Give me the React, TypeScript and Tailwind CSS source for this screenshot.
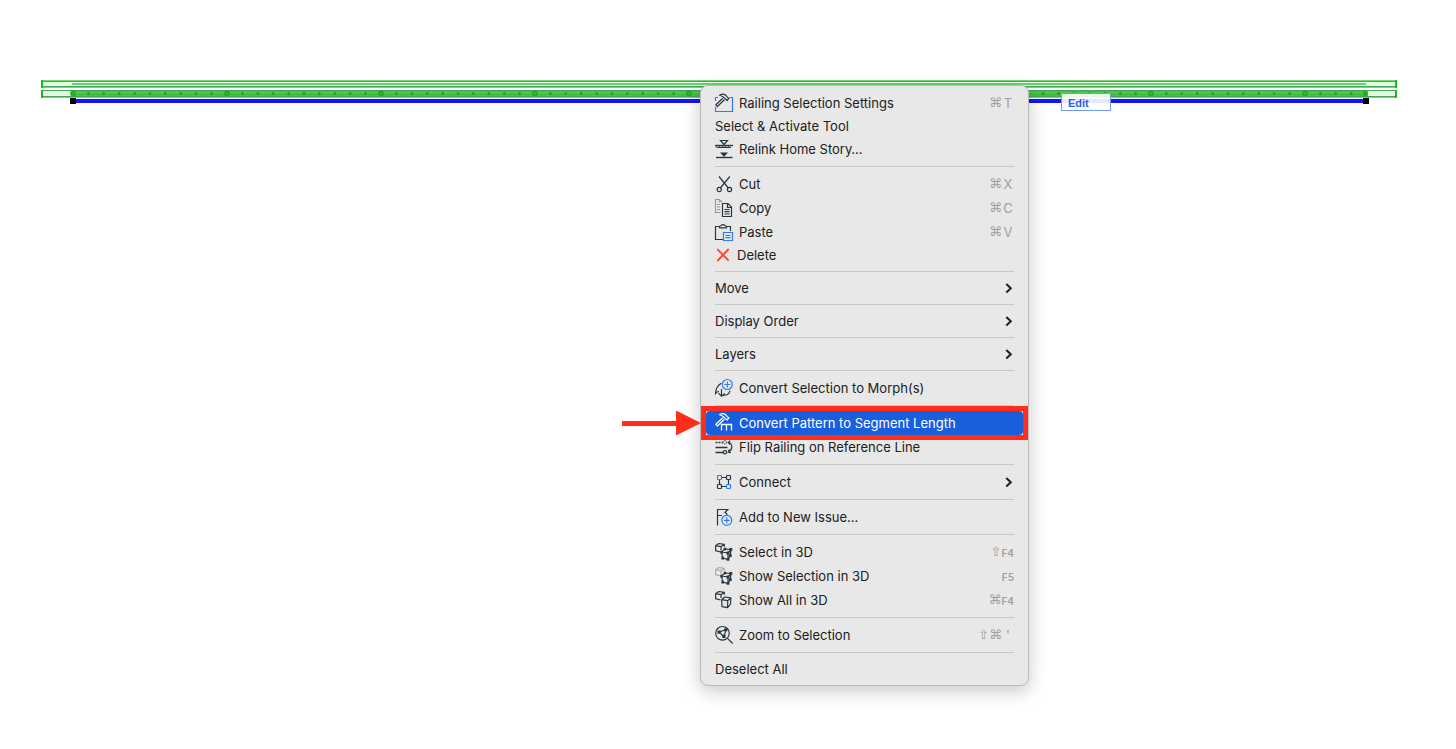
import type { ReactNode } from "react";

const INK = "#29363d";
const BLUE = "#2f7bf6";

function Icon({ children, color = INK }: { children: ReactNode; color?: string }) {
  return (
    <svg
      aria-hidden="true"
      viewBox="0 0 18 20"
      className="h-5 w-[18px] shrink-0 overflow-visible"
      fill="none"
      stroke={color}
      strokeWidth="1.2"
    >
      {children}
    </svg>
  );
}

const hammer = (
  <>
    <path
      d="M4.500 2.300C7 .8 9.800 1 11.300 2.900l1.200 1.600 1.500.7-1.900 2.300-1.300-1-2.600-2.600C7.200 3.200 6 2.800 4.500 2.300Z"
      strokeLinejoin="round"
    />
    <path d="M7.800 5.200.8 11.800l1.600 1.700 7-6.700" strokeLinejoin="round" />
  </>
);

const settingsIcon = (
  <Icon>
    <path d="M3 4.500H.5V8M.5 14v4.500h17v-14h-3" stroke={BLUE} />
    {hammer}
  </Icon>
);

const relinkIcon = (
  <Icon>
    <path d="M5.500 1.500h7L9 5.500Z" />
    <path d="M0 6.500h18" strokeWidth="1.400" />
    <path d="M1 8.500 2.500 6.500M4 8.500l1.500-2M7 8.500l1.500-2M10 8.500l1.500-2M13 8.500l1.500-2M2 8.500h14" strokeWidth="1" />
    <path d="M5 13.500h8L9 18Z" fill={INK} stroke="none" />
    <path d="M1 18.500h16.500" strokeWidth="1.400" />
  </Icon>
);

const cutIcon = (
  <Icon>
    <path d="M4 2.500 13.300 14M14.800 2.500 5.300 14" />
    <circle cx="4.200" cy="15.500" r="2.100" />
    <circle cx="14.500" cy="15.500" r="2.100" />
  </Icon>
);

const copyIcon = (
  <Icon>
    <path d="M5.500 14.500h-5v-13h4l2.500 2.500M4.500 1.500v3M2 6.500h3M2 9h3M2 11.500h3" stroke="#929a9d" />
    <path d="M7.500 5.500h5.500l3.500 3.500v9.500h-9ZM12.500 5.500v4h4M9.500 11.500h5M9.500 13.700h5M9.500 16h5" />
  </Icon>
);

const pasteIcon = (
  <Icon>
    <path d="M8 17.500H.5V4.500H4M12 4.500h3.500V9" />
    <path d="M4.500 5.800V4.200L6 3.700Q8 1.500 10 3.700l1.500.5v1.600Z" strokeLinejoin="round" />
    <path d="M8.500 10.500h9v8h-9ZM10.500 13.500h5M10.500 15.700h5" stroke={BLUE} />
  </Icon>
);

const deleteIcon = (
  <svg aria-hidden="true" viewBox="0 0 16 20" className="h-5 w-4 shrink-0" fill="none" stroke="#fb4a2f" strokeWidth="1.900">
    <path d="M2.300 4.200 13.700 15.700M13.700 4 2.300 16" />
  </svg>
);

const morphIcon = (
  <Icon>
    <path d="M6.300 5.200C3 7 .7 10.500.6 15.500 1.600 14 2.800 13.500 4 13.500M6.500 11v7M3.500 15.200l3 3 3.200-2.700M8.500 17.500c4-.3 6-2 6.500-5" />
    <circle cx="12.300" cy="6.500" r="5" stroke={BLUE} />
    <path d="M12.300 3.500v6M9.300 6.500h6" stroke={BLUE} />
  </Icon>
);

const patternIcon = (
  <Icon color="#ffffff">
    <g transform="translate(0 -.5)">{hammer}</g>
    <path d="M6 11.500h11M6.500 11v6.500M11.500 11v6.500M16.500 11v6.500" strokeWidth="1.300" />
  </Icon>
);

const flipIcon = (
  <Icon>
    <path d="M.5 5.500H8" strokeDasharray="2 1" strokeWidth="1.600" />
    <path d="M.5 10.500h12M.5 15.500h7.500" strokeWidth="1.400" />
    <circle cx="10" cy="5.300" r="1.700" strokeWidth="1" strokeDasharray="1.500 .7" />
    <circle cx="10" cy="15.300" r="1.700" />
    <path d="M13.500 5.500c2.500.5 3.300 2.300 3.300 4.500 0 2.200-1 3.800-3.300 5M15.300 3.700l-2 1.800 1.800 2M14.500 12.300l-1.200 2.700 2.700.7" />
  </Icon>
);

const connectIcon = (
  <Icon>
    <path d="M6.500 5.500h5M4.500 7.500v5M13.500 7.500v5M6.500 14.500h5" />
    <rect x="2.500" y="3.500" width="4" height="4" rx=".8" stroke={BLUE} />
    <rect x="11.500" y="3.500" width="4" height="4" rx=".8" />
    <rect x="2.500" y="12.500" width="4" height="4" rx=".8" />
    <rect x="11.500" y="12.500" width="4" height="4" rx=".8" stroke={BLUE} />
  </Icon>
);

const issueIcon = (
  <Icon>
    <path d="M2.500 18.500v-16h10.300L10 5.500l2.500 2M2.500 8.500H7" />
    <circle cx="11.800" cy="13.300" r="5" stroke={BLUE} />
    <path d="M11.800 10.300v6M8.800 13.300h6" stroke={BLUE} />
  </Icon>
);

const backCube = "M5.500 10 .6 8.700V3.700L3.800 1.500 9.300 2.300V4.800M.6 3.700 6 4.700V8M6 4.700 9.300 2.300";

function MeshIcon({ faded = false }: { faded?: boolean }) {
  return (
    <Icon>
      <path d={backCube} stroke={faded ? "#a9aeb0" : INK} strokeLinejoin="round" />
      <path d="M6.500 10 7.700 16.300l5.300 1V11ZM6.500 10 10 7l6 .5-.7 6L13 17.300M13 11l3-3.500" />
      <path
        d="M5.200 8.700h2.700v2.700H5.200ZM8.700 5.700h2.600v2.600H8.700ZM14.500 6h2.800v2.800h-2.800ZM11.600 9.600h2.800v2.800h-2.800ZM6.400 14.800h2.700v2.700H6.400ZM11.600 15.900h2.800v2.800h-2.800ZM14 12.200h2.700v2.700H14Z"
        fill={INK}
        stroke="none"
      />
    </Icon>
  );
}

const allIcon = (
  <Icon>
    <path d={backCube} strokeLinejoin="round" />
    <path
      d="M6.700 9.700 9.700 7l6.200.8-.4 6.200-2.900 3.700L7 16.700ZM6.700 9.700l6 1 3.200-2.900M12.700 10.700l-.1 7"
      fill="#e8e8e8"
      strokeLinejoin="round"
    />
  </Icon>
);

const zoomIcon = (
  <Icon>
    <circle cx="7.500" cy="8.300" r="6.800" />
    <path d="M12.500 13.300l5.200 5.200M4 7l7-2.300-2 7Z" />
    <path d="M2.500 5.500h3.200v3.200H2.500ZM9.300 3.200h3v3h-3ZM7.300 9.800h3.200V13H7.300Z" fill={INK} stroke="none" />
  </Icon>
);

type Item = {
  label: string;
  icon?: ReactNode;
  mods?: string;
  letter?: string;
  fkey?: string;
  submenu?: boolean;
  active?: boolean;
};

const groups: Item[][] = [
  [
    { label: "Railing Selection Settings", icon: settingsIcon, mods: "⌘", letter: "T" },
    { label: "Select & Activate Tool" },
    { label: "Relink Home Story…", icon: relinkIcon },
  ],
  [
    { label: "Cut", icon: cutIcon, mods: "⌘", letter: "X" },
    { label: "Copy", icon: copyIcon, mods: "⌘", letter: "C" },
    { label: "Paste", icon: pasteIcon, mods: "⌘", letter: "V" },
    { label: "Delete", icon: deleteIcon },
  ],
  [{ label: "Move", submenu: true }],
  [{ label: "Display Order", submenu: true }],
  [{ label: "Layers", submenu: true }],
  [{ label: "Convert Selection to Morph(s)", icon: morphIcon }],
  [
    { label: "Convert Pattern to Segment Length", icon: patternIcon, active: true },
    { label: "Flip Railing on Reference Line", icon: flipIcon },
  ],
  [{ label: "Connect", icon: connectIcon, submenu: true }],
  [{ label: "Add to New Issue…", icon: issueIcon }],
  [
    { label: "Select in 3D", icon: <MeshIcon />, mods: "⇧", fkey: "F4" },
    { label: "Show Selection in 3D", icon: <MeshIcon faded />, fkey: "F5" },
    { label: "Show All in 3D", icon: allIcon, mods: "⌘", fkey: "F4" },
  ],
  [{ label: "Zoom to Selection", icon: zoomIcon, mods: "⇧⌘", letter: "'" }],
  [{ label: "Deselect All" }],
];

function Shortcut({ mods, letter, fkey }: Item) {
  return (
    <kbd className="ml-auto flex items-center font-['Inter',sans-serif] text-[13px] text-[#a0a0a0]">
      {mods && <span className="font-['DejaVu_Sans',sans-serif] text-[13px]">{mods}</span>}
      {letter && <span className="w-3 text-center">{letter}</span>}
      {fkey && <span className="pt-px text-[10px] font-semibold">{fkey}</span>}
    </kbd>
  );
}

function MenuRow({ item }: { item: Item }) {
  const tall = item.icon && item.label !== "Delete";
  return (
    <li role="none" className="relative px-[5px]">
      <button
        type="button"
        role="menuitem"
        aria-haspopup={item.submenu ? "menu" : undefined}
        className={`flex w-full items-center gap-1.5 rounded px-[9px] text-left whitespace-nowrap ${tall ? "h-6" : "h-[22px]"} ${
          item.active ? "bg-[#195fdb] text-white" : "text-[#202020]"
        }`}
      >
        {item.icon}
        <span>{item.label}</span>
        {(item.mods || item.fkey) && <Shortcut {...item} />}
        {item.submenu && (
          <svg aria-hidden="true" viewBox="0 0 10 12" className="ml-auto h-3 w-2.5" fill="none" stroke="#202020" strokeWidth="2">
            <path d="M2.300 2l4.500 4.200-4.500 4.200" />
          </svg>
        )}
      </button>
      {item.active && (
        <>
          <span className="pointer-events-none absolute inset-x-0 -inset-y-[5px] z-10 border-[5px] border-[#ff2d1a]" />
          <svg
            aria-hidden="true"
            viewBox="0 0 79 26"
            className="pointer-events-none absolute top-0 right-full z-10 h-[26px] w-[79px]"
            fill="#ff2d1a"
          >
            <path d="M0 10h54V-.5L79 12 54 24.500V15H0Z" />
          </svg>
        </>
      )}
    </li>
  );
}

function Railing() {
  const posts = Array.from({ length: 84 }, (_, i) => 32 + i * 15.4);
  return (
    <svg role="img" aria-label="Railing plan" viewBox="0 0 1356 26" className="block w-full">
      <rect x="0" y="0" width="1356" height="8" fill="#e1f8e1" />
      <rect x="31" y="1" width="1294" height="6" fill="#f4fff4" />
      <path d="M0 .5h1356M0 7.500h1356" stroke="#73d873" />
      <path d="M0 1.500h1356M0 6.500h1356" stroke="#43a957" />
      <path d="M31 4h1294" stroke="#6dd46b" strokeWidth="2" />
      <rect x="0" y="10" width="1356" height="8" fill="#e1f8e1" />
      <rect x="31" y="11" width="1294" height="6" fill="#3dc23d" />
      <path d="M31 12.500h1294" stroke="#52cd4f" />
      <path d="M0 10.500h1356M0 16.500h1356" stroke="#43a957" />
      <path d="M0 17.500h1356" stroke="#73d873" />
      <path d="M1 0v8M1 10v8M1355 0v8M1355 10v8" stroke="#24b52b" strokeWidth="2" />
      {posts.map((x, i) =>
        i % 10 === 0 ? (
          <circle key={i} cx={x} cy="13.500" r="2" fill="#2fc231" stroke="#1ca922" strokeWidth="1.500" />
        ) : (
          <path key={i} d={`M${x - 1.5} 13.500h3M${x} 12v3`} stroke="#219f2a" strokeWidth="1.300" />
        ),
      )}
      <ellipse cx="32" cy="13.500" rx="2.500" ry="3.500" fill="#1fb324" />
      <ellipse cx="1324.500" cy="13.500" rx="2.500" ry="3.500" fill="#1fb324" />
      <path d="M32 21h1293" stroke="#1414fa" strokeWidth="4" />
      <path d="M29 18h6v6h-6ZM1322 18h6v6h-6Z" fill="#000" />
    </svg>
  );
}

export default function App() {
  return (
    <main className="relative min-h-screen overflow-hidden bg-white pt-20 pr-[59px] pl-[41px] font-['Inter',sans-serif] text-[13px] leading-5">
      <Railing />
      <button
        type="button"
        className="absolute top-[93px] left-[1061px] h-[18px] w-[50px] border border-[#6f9cf3] bg-white/90 pt-px pl-1.5 text-left font-['Liberation_Sans',sans-serif] text-[11px] leading-4 font-bold text-[#2560f0]"
      >
        Edit
      </button>
      <div className="absolute top-[85px] left-[700px] w-[329px] rounded-lg border border-[#bcbcbc] bg-[#e8e8e8] py-[5px] shadow-[0_5px_18px_rgba(0,0,0,0.22)]">
        <ul role="menu" aria-label="Railing actions">
          {groups.map((group, g) => (
            <li role="none" key={g}>
              {g > 0 && <hr className="mx-3.5 my-[5px] border-t border-[#c6c6c6]" />}
              <ul role="group">
                {group.map((item) => (
                  <MenuRow key={item.label} item={item} />
                ))}
              </ul>
            </li>
          ))}
        </ul>
      </div>
    </main>
  );
}
